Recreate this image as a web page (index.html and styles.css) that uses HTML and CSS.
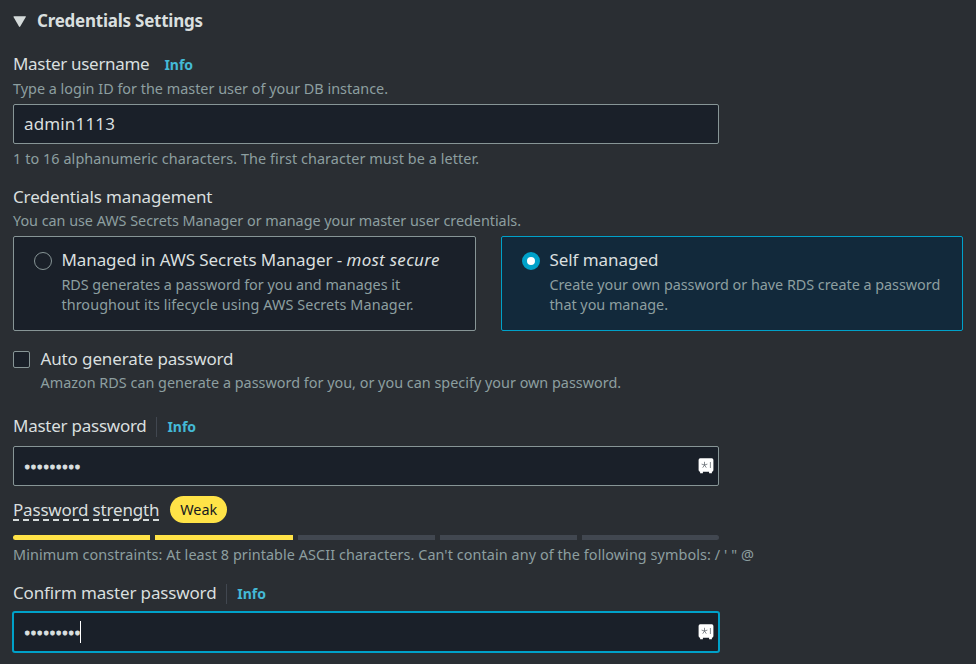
FILE: index.html
```html
<!DOCTYPE html>
<html lang="en">
<head>
<meta charset="utf-8">
<title>Credentials Settings</title>
<link rel="stylesheet" href="styles.css">
</head>
<body>
<svg class="defs" aria-hidden="true">
  <symbol id="vault" viewBox="0 0 16 16">
    <path fill="#fff" d="M2.2.3h11.6q1.600 0 1.600 1.600v10.200q0 1.500-1.500 1.600v1.600h-2.800v-1.500H4.900v1.500H2.100v-1.600Q.6 13.600.6 12.100V1.900Q.6.3 2.200.3z"/>
    <path fill="none" stroke="#555b63" stroke-width=".7" d="M6.500 3.800v3.200M3.600 6.100l2.900.9M9.400 6.100l-2.900.9M4.700 9.700l1.800-2.700L8.300 9.700M12.400 4v6"/>
  </symbol>
</svg>
<main class="panel">
  <header class="section-title">
    <svg class="caret" viewBox="0 0 13 11"><path d="M1 .3h11.400q.8 0 .4.700L7.200 10.500q-.6.8-1.200 0L.5 1Q.1.300 1 .3z"/></svg>
    <h2>Credentials Settings</h2>
  </header>

  <section class="field username">
    <div class="label-row"><label class="label snug-3">Master username</label><a class="info">Info</a></div>
    <p class="hint">Type a login ID for the master user of your DB instance.</p>
    <div class="input"><span class="value">admin1113</span></div>
    <p class="hint wide constraint">1 to 16 alphanumeric characters. The first character must be a letter.</p>
  </section>

  <section class="field management">
    <div class="label snug-1">Credentials management</div>
    <p class="hint tight">You can use AWS Secrets Manager or manage your master user credentials.</p>
    <div class="tiles">
      <div class="tile">
        <span class="radio"></span>
        <div>
          <div class="label managed">Managed in AWS Secrets Manager - <em>most secure</em></div>
          <p class="tile-text"><span class="tight">RDS generates a password for you and manages it</span><br><span class="wide">throughout its lifecycle using AWS Secrets Manager.</span></p>
        </div>
      </div>
      <div class="tile selected">
        <span class="radio"></span>
        <div>
          <div class="label">Self managed</div>
          <p class="tile-text tight">Create your own password or have RDS create a password<br>that you manage.</p>
        </div>
      </div>
    </div>
  </section>

  <section class="auto">
    <span class="checkbox"></span>
    <div>
      <div class="label snug-1">Auto generate password</div>
      <p class="hint">Amazon RDS can generate a password for you, or you can specify your own password.</p>
    </div>
  </section>

  <section class="field password">
    <div class="label-row"><label class="label snug-2">Master password</label><a class="info divided">Info</a></div>
    <div class="input"><span class="dots">•••••••••</span><svg class="vault"><use href="#vault"/></svg></div>
    <div class="strength"><span class="label snug-2 dashed">Password strength</span><span class="badge">Weak</span></div>
    <div class="meter"><i class="on"></i><i class="on"></i><i></i><i></i><i></i></div>
    <p class="hint wide minimum">Minimum constraints: At least 8 printable ASCII characters. Can't contain any of the following symbols: / ' " @</p>
  </section>

  <section class="field confirm">
    <div class="label-row"><label class="label snug-1">Confirm master password</label><a class="info divided">Info</a></div>
    <div class="input focused"><span class="dots">•••••••••</span><span class="cursor"></span><svg class="vault"><use href="#vault"/></svg></div>
  </section>
</main>
</body>
</html>
```
FILE: styles.css
```css
* { box-sizing: border-box; }
body {
  margin: 0;
  background: #2a2e33;
  color: #d9dfdf;
  font-family: "Noto Sans", sans-serif;
  font-size: 17px;
  line-height: 23px;
}
h2, p { margin: 0; }
.defs { display: none; }
.panel { width: 976px; height: 664px; padding: 9px 13px 0; overflow: hidden; }

.section-title { display: flex; align-items: center; gap: 11px; height: 23px; }
.section-title h2 { font-size: 17px; font-weight: 700; line-height: 23px; letter-spacing: -0.24px; }
.caret { width: 13px; height: 11px; fill: #d5dbdb; margin-top: 2px; }

.label { white-space: nowrap; letter-spacing: -0.05px; }
.label-row { display: flex; align-items: baseline; height: 23px; }
.snug-1 { letter-spacing: -0.13px; }
.snug-2 { letter-spacing: -0.19px; }
.snug-3 { letter-spacing: -0.31px; }
.managed { letter-spacing: -0.07px; }
.managed em { letter-spacing: 0.28px; }
.password .label-row .label { letter-spacing: -0.25px; }
.confirm .label-row .label { letter-spacing: -0.15px; }

.info { margin-left: 15px; color: #44b9d6; font-size: 14px; font-weight: 700; line-height: 20px; }
.info.divided { margin-left: 9.3px; padding-left: 10.5px; border-left: 1px solid #414750; }

.hint { color: #8d9fa0; font-size: 14.4px; line-height: 19px; white-space: nowrap; letter-spacing: 0.005px; }
.tight { letter-spacing: -0.03px; }
.wide { letter-spacing: 0.08px; }

.input {
  display: flex;
  align-items: center;
  width: 706px;
  height: 40px;
  padding: 0 4px 0 10px;
  background: #1a2029;
  border: 1px solid #879596;
  border-radius: 2px;
}
.value { margin-bottom: 2px; letter-spacing: 0.15px; }
.dots { letter-spacing: -0.1px; -webkit-text-stroke: 0.8px #d9dfdf; }
.vault { width: 16px; height: 16px; margin-left: auto; }
.input.focused { width: 708px; height: 42px; margin-left: -1px; border: 2px solid #00a1c9; border-radius: 3px; }
.cursor { width: 1px; height: 22px; margin-left: -1px; background: #fff; }

.username { margin-top: 20px; }
.username .hint { margin-top: 4px; }
.username .input { margin-top: 6px; }
.username .constraint { margin-top: 5px; }

.management { margin-top: 17px; }
.management .hint { margin-top: 3px; }
.tiles { display: grid; grid-template-columns: 463px 462px; gap: 25px; margin-top: 6px; }
.tile {
  display: flex;
  gap: 9.4px;
  height: 95px;
  padding: 11px 20px;
  background: #1a2029;
  border: 1px solid #879596;
  border-radius: 2px;
}
.tile.selected { background: #12293b; border-color: #00a1c9; }
.tile-text { margin-top: 4px; color: #8d9fa0; font-size: 14.4px; line-height: 20px; white-space: nowrap; }
.radio { flex: none; width: 18px; height: 18px; margin-top: 4px; border: 1px solid #879596; border-radius: 50%; }
.selected .radio { border: 5.500px solid #00a1c9; background: #fff; }

.auto { display: flex; gap: 10.5px; margin-top: 16px; }
.auto .hint { margin-top: 3px; }
.checkbox { width: 17px; height: 17px; margin-top: 4px; background: #1a2029; border: 1px solid #879596; border-radius: 2px; }

.password { margin-top: 22px; }
.password .input { margin-top: 9px; }
.strength { display: flex; align-items: center; gap: 11px; height: 27px; margin-top: 10px; }
.dashed {
  background: repeating-linear-gradient(90deg, #d5dbdb 0 6px, transparent 6px 10px) 0 100% / 100% 2px no-repeat;
}
.badge { width: 57px; height: 27px; border-radius: 14px; background: #ffe347; color: #16191f; font-size: 14.4px; line-height: 27px; text-align: center; }
.meter { display: grid; grid-template-columns: 137px 138px 137px 137px 137px; gap: 5px; width: 706px; margin-top: 12px; }
.meter i { height: 5px; background: #414750; }
.meter .on { background: #ffe347; }
.meter i:first-child { border-radius: 3px 0 0 3px; }
.meter i:last-child { border-radius: 0 3px 3px 0; }
.minimum { margin-top: 5px; }

.confirm { margin-top: 17px; }
.confirm .input { margin-top: 7px; }
```
